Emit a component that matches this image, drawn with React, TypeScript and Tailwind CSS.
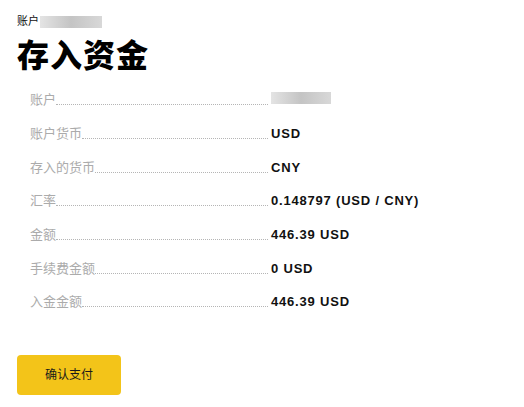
const rows: { label: string; value?: string }[] = [
  { label: "账户" },
  { label: "账户货币", value: "USD" },
  { label: "存入的货币", value: "CNY" },
  { label: "汇率", value: "0.148797 (USD / CNY)" },
  { label: "金额", value: "446.39 USD" },
  { label: "手续费金额", value: "0 USD" },
  { label: "入金金额", value: "446.39 USD" },
];

function Blur({ className }: { className: string }) {
  return (
    <span
      className={`inline-block bg-gradient-to-r from-[#e4e4e4] via-[#c4c4c4] to-[#d8d8d8] ${className}`}
    />
  );
}

export default function App() {
  return (
    <main className="min-h-screen bg-white px-[17px] pt-[15px] font-['Liberation_Sans','Noto_Sans_CJK_SC',sans-serif]">
      <div className="flex h-[13px] items-center text-[11px] leading-none text-[#111]">
        <span>账户</span>
        <Blur className="ml-px h-[12px] w-[62px]" />
      </div>

      <h1 className="mt-[12px] text-[32px] font-black leading-[32px] tracking-[1px] text-black">
        存入资金
      </h1>

      <div className="mt-[11px] pl-[13px]">
        {rows.map((row, i) => (
          <div key={i} className="flex h-[33.67px] items-center">
            <div className="flex w-[238px] items-end">
              <span className="text-[13px] leading-none text-[#ababab]">{row.label}</span>
              <span className="mb-[1px] flex-1 border-b border-dotted border-[#b5b5b5]" />
            </div>
            <div className="ml-[3px] text-[13px] font-bold leading-none tracking-[0.8px] text-[#111]">
              {row.value ?? <Blur className="-mt-[5px] h-[12px] w-[60px] align-middle" />}
            </div>
          </div>
        ))}
      </div>

      <button
        type="button"
        className="mt-[36px] h-[40px] w-[104px] rounded-[4px] bg-[#f3c419] text-[12px] text-[#1a1a1a]"
      >
        确认支付
      </button>
    </main>
  );
}
